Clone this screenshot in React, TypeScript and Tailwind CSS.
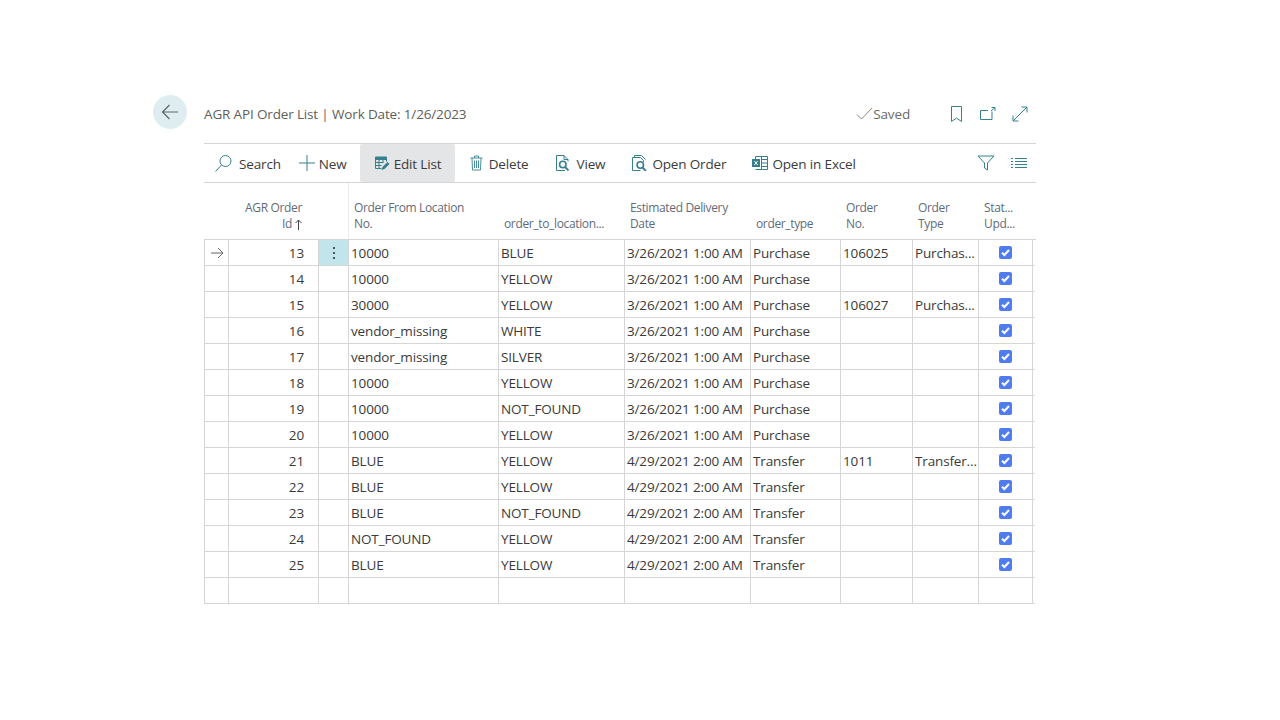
import React from "react";

const T = "#35808f";
const rows: [string, string, string, string, string, string, string][] = [
  ["13", "10000", "BLUE", "3/26/2021 1:00 AM", "Purchase", "106025", "Purchas..."],
  ["14", "10000", "YELLOW", "3/26/2021 1:00 AM", "Purchase", "", ""],
  ["15", "30000", "YELLOW", "3/26/2021 1:00 AM", "Purchase", "106027", "Purchas..."],
  ["16", "vendor_missing", "WHITE", "3/26/2021 1:00 AM", "Purchase", "", ""],
  ["17", "vendor_missing", "SILVER", "3/26/2021 1:00 AM", "Purchase", "", ""],
  ["18", "10000", "YELLOW", "3/26/2021 1:00 AM", "Purchase", "", ""],
  ["19", "10000", "NOT_FOUND", "3/26/2021 1:00 AM", "Purchase", "", ""],
  ["20", "10000", "YELLOW", "3/26/2021 1:00 AM", "Purchase", "", ""],
  ["21", "BLUE", "YELLOW", "4/29/2021 2:00 AM", "Transfer", "1011", "Transfer..."],
  ["22", "BLUE", "YELLOW", "4/29/2021 2:00 AM", "Transfer", "", ""],
  ["23", "BLUE", "NOT_FOUND", "4/29/2021 2:00 AM", "Transfer", "", ""],
  ["24", "NOT_FOUND", "YELLOW", "4/29/2021 2:00 AM", "Transfer", "", ""],
  ["25", "BLUE", "YELLOW", "4/29/2021 2:00 AM", "Transfer", "", ""],
];

const Svg = ({ w = 18, h = 18, vb = "0 0 18 18", children }: { w?: number; h?: number; vb?: string; children: React.ReactNode }) => (
  <svg width={w} height={h} viewBox={vb} fill="none" stroke={T} strokeWidth="1" className="shrink-0">{children}</svg>
);

const Check = () => (
  <span className="flex h-[13px] w-[13px] items-center justify-center rounded-[2px] bg-[#4f7cf0]">
    <svg width="11" height="11" viewBox="0 0 11 11" fill="none" stroke="#fff" strokeWidth="2"><path d="M2 5.800 4.400 8 9 3" /></svg>
  </span>
);

const Action = ({ icon, label, className }: { icon: React.ReactNode; label: string; className: string }) => (
  <div className={`flex h-full items-center ${className}`}>
    {icon}
    <span className="pt-[2px]">{label}</span>
  </div>
);

export default function App() {
  return (
    <div className="flex min-h-[720px] bg-white pl-[153px] pt-[95px] font-['Open_Sans',sans-serif] text-[13.5px] tracking-[-0.15px] text-[#333]">
      <div className="flex h-[34px] w-[34px] shrink-0 items-center justify-center rounded-full bg-[#deeef0]">
        <svg width="20" height="20" viewBox="0 0 20 20" fill="none" stroke="#5f6468" strokeWidth="1.200"><path d="M18 10H2.500M9.500 3 2.500 10l7 7" /></svg>
      </div>
      <div className="ml-[17px] w-[832px]">
        <div className="flex h-[48px] items-center justify-between pb-[10px] text-[#605e5c]">
          <span className="tracking-[-0.15px]">AGR API Order List | Work Date: 1/26/2023</span>
          <div className="mr-[7px] flex items-center">
            <svg width="17" height="14" viewBox="0 0 17 14" fill="none" stroke="#777" strokeWidth="0.900"><path d="M1 7.500 5.500 12 16 1" /></svg>
            <span className="text-[#6b6b6b]">Saved</span>
            <div className="ml-[39px]"><Svg w={16} h={18} vb="0 0 16 18"><path d="M2.500 1.500h10v15l-5-3.400-5 3.400z" /></Svg></div>
            <div className="ml-[14px]"><Svg w={18} h={16} vb="0 0 18 16"><path d="M13 5.500v8H1.500v-9H9M12 5l4-3.500M12.500 1.500H16V5" /></Svg></div>
            <div className="ml-[14px]"><Svg w={18} h={18} vb="0 0 18 18"><path d="M2 16 16 2M10.500 2H16v5.500M2 10.500V16h5.500" /></Svg></div>
          </div>
        </div>
        <div className="flex h-[40px] items-center border-y border-[#d6d6d6] text-[#3b3b3b]">
          <Action className="ml-[10px] gap-[6px]" label="Search" icon={<Svg w={19} h={19} vb="0 0 19 19"><circle cx="11.500" cy="7" r="5.500" /><path d="M7.500 11 1.500 17.500" /></Svg>} />
          <Action className="ml-[18px] gap-[4px]" label="New" icon={<Svg w={16} h={16} vb="0 0 16 16"><path d="M8 0v16M0 8h16" /></Svg>} />
          <Action className="ml-[13px] w-[95px] gap-[4px] rounded-[2px] bg-[#e4e5e6] pl-[15px]" label="Edit List" icon={
            <Svg w={15} h={15} vb="0 0 15 15"><path d="M.5 2.500h11v3M.5 2.500v10h6M.5 6.500h8M.5 9.500h6M4 2.500v10M8 2.500v4" /><path d="M.5 1h11v2.500H.5z" fill={T} /><path d="M6.500 14l1-3 5-5 2 2-5 5z" fill={T} stroke="none" /></Svg>} />
          <Action className="ml-[15px] gap-[6px]" label="Delete" icon={
            <Svg w={13} h={16} vb="0 0 13 16"><path d="M.5 3h12M4.500 3V1h4v2M2 3l.5 12h8L11 3M4.500 5.500v7.500M6.500 5.500v7.500M8.500 5.500v7.500" strokeWidth="0.900" /></Svg>} />
          <Action className="ml-[28px] gap-[5px]" label="View" icon={
            <Svg w={15} h={16} vb="0 0 15 16"><path d="M9 15.500H.5V.5H8l4 4v2M8 .5v4h4" /><circle cx="6.800" cy="9.500" r="3.200" strokeWidth="1.600" /><path d="m9 12 3.500 3.500" strokeWidth="1.800" /></Svg>} />
          <Action className="ml-[27px] gap-[4px]" label="Open Order" icon={
            <Svg w={16} h={16} vb="0 0 16 16"><path d="M2.500 2V.5h7l4 4M.5 2.500h8l3 3V7M.5 2.500v13h8" /><circle cx="8.300" cy="10" r="3.200" strokeWidth="1.600" /><path d="m10.500 12.500 3.500 3.500" strokeWidth="1.800" /></Svg>} />
          <Action className="ml-[26px] gap-[4px]" label="Open in Excel" icon={
            <Svg w={16} h={14} vb="0 0 16 14"><path d="M3.500.5h12v13h-12M9.500.5v13M9.500 3.500h6M9.500 7h6M9.500 10.500h6M3.500.5V3" /><path d="M0 3h8v8H0z" fill={T} stroke="none" /><path d="m2.300 5 3.400 4M5.700 5 2.300 9" stroke="#fff" /></Svg>} />
          <div className="ml-auto mr-[9px] flex items-center gap-[16px]">
            <Svg w={18} h={16} vb="0 0 18 16"><path d="M1 1h16l-6.500 7v7l-3-2V8z" /></Svg>
            <Svg w={16} h={12} vb="0 0 16 12"><path d="M0 1.500h2M4 1.500h12M0 4.500h2M4 4.500h12M0 7.500h2M4 7.500h12M0 10.500h2M4 10.500h12" /></Svg>
          </div>
        </div>
        <div className="flex h-[57px] border-b border-[#d6d6d6] text-[12px] leading-[16px] tracking-[-0.35px] text-[#5f6b7a]">
          <div className="w-[25px]" />
          <div className="flex w-[90px] flex-col items-end justify-end pb-[7px] pr-[16px] text-right">
            <span className="pr-[1px]">AGR Order</span>
            <span className="flex items-center gap-[3px] pr-[1px]">Id
              <svg width="7" height="11" viewBox="0 0 7 11" fill="none" stroke="#444" strokeWidth="1"><path d="M3.500 11V1M.5 4l3-3 3 3" /></svg>
            </span>
          </div>
          <div className="w-[30px] border-r border-[#ececec]" />
          <div className="flex w-[150px] flex-col justify-end pb-[7px] pl-[5px]"><span>Order From Location</span><span>No.</span></div>
          <div className="flex w-[126px] flex-col justify-end pb-[7px] pl-[5px]"><span>order_to_location...</span></div>
          <div className="flex w-[126px] flex-col justify-end pb-[7px] pl-[5px]"><span>Estimated Delivery</span><span>Date</span></div>
          <div className="flex w-[90px] flex-col justify-end pb-[7px] pl-[5px]"><span>order_type</span></div>
          <div className="flex w-[72px] flex-col justify-end pb-[7px] pl-[5px]"><span>Order</span><span>No.</span></div>
          <div className="flex w-[66px] flex-col justify-end pb-[7px] pl-[5px]"><span>Order</span><span>Type</span></div>
          <div className="flex w-[54px] flex-col justify-end pb-[7px] pl-[5px]"><span>Stat...</span><span>Upd...</span></div>
        </div>
        {rows.map((r, i) => (
          <Row key={r[0]} r={r} first={i === 0} />
        ))}
        <Row first={false} />
      </div>
    </div>
  );
}

function Row({ r, first }: { r?: (typeof rows)[number]; first: boolean }) {
  const cell = "flex h-full items-center border-r border-[#d6d6d6] whitespace-nowrap overflow-hidden";
  const text = `${cell} pl-[2px] pt-[2px]`;
  return (
    <div className="flex h-[26px] w-[831px] items-center border-b border-l border-[#d6d6d6] text-[#3a3a3a]">
      <div className={`${cell} w-[24px] justify-center`}>
        {first && <svg width="14" height="12" viewBox="0 0 14 12" fill="none" stroke="#666" strokeWidth="1"><path d="M1 6h12M8 1l5 5-5 5" /></svg>}
      </div>
      <div className={`${cell} w-[90px] justify-end pr-[14px] pt-[2px]`}>{r?.[0]}</div>
      <div className={`${cell} w-[30px] justify-center ${first ? "bg-[#c2e5ec]" : ""}`}>
        {first && <svg width="4" height="14" viewBox="0 0 4 14" fill="#333"><circle cx="2" cy="2" r="1.100" /><circle cx="2" cy="7" r="1.100" /><circle cx="2" cy="12" r="1.100" /></svg>}
      </div>
      <div className={`${text} w-[150px]`}>{r?.[1]}</div>
      <div className={`${text} w-[126px]`}>{r?.[2]}</div>
      <div className={`${text} w-[126px]`}>{r?.[3]}</div>
      <div className={`${text} w-[90px]`}>{r?.[4]}</div>
      <div className={`${text} w-[72px]`}>{r?.[5]}</div>
      <div className={`${text} w-[66px]`}>{r?.[6]}</div>
      <div className={`${cell} w-[54px] justify-center`}>{r && <Check />}</div>
    </div>
  );
}
